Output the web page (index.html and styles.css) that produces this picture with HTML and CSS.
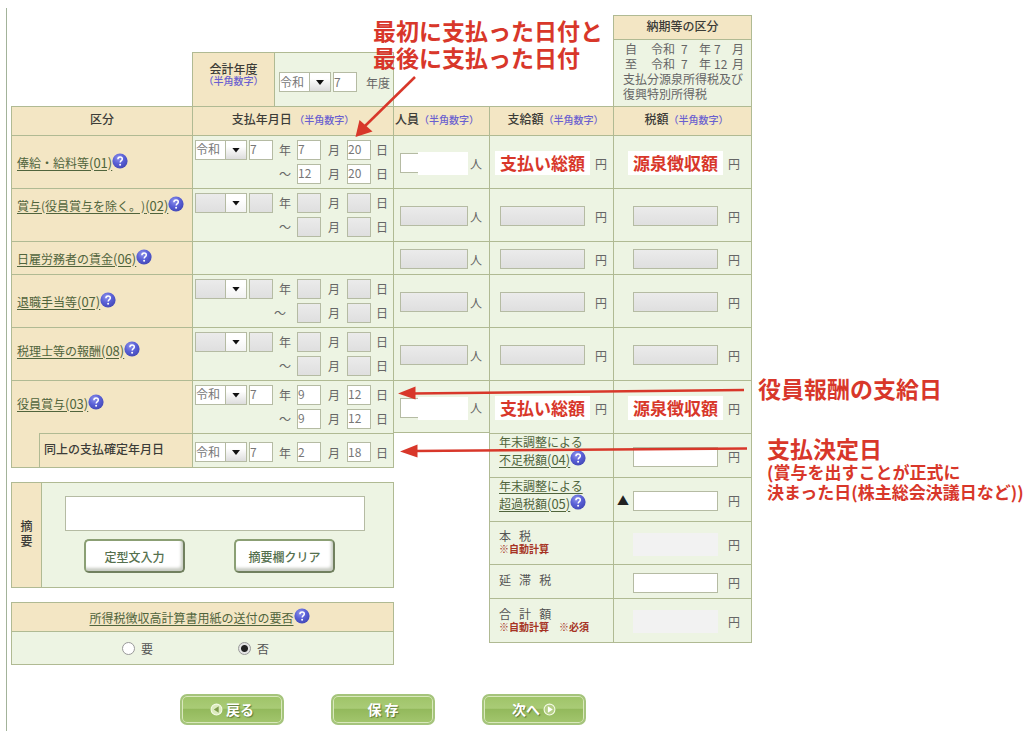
FILE: index.html
```html
<!DOCTYPE html>
<html lang="ja">
<head>
<meta charset="utf-8">
<meta name="viewport" content="width=device-width, initial-scale=1">
<title>所得税徴収高計算書</title>
<link rel="stylesheet" href="styles.css">
</head>
<body>
<svg class="defs" width="0" height="0" aria-hidden="true">
  <defs>
    <radialGradient id="ball" cx="0.4" cy="0.3" r="0.75">
      <stop offset="0" stop-color="#8f94ec"/>
      <stop offset="0.5" stop-color="#5a60d6"/>
      <stop offset="1" stop-color="#4046b4"/>
    </radialGradient>
    <symbol id="help" viewBox="0 0 16 16">
      <circle cx="8" cy="8" r="7.6" fill="url(#ball)"/>
      <path d="M5.9 6.3C5.9 4.8 6.8 4 8.1 4s2.2.8 2.2 2c0 1.700-2.100 1.700-2.100 3.500" fill="none" stroke="#fff" stroke-width="1.500"/>
      <circle cx="8.100" cy="11.700" r="1" fill="#fff"/>
    </symbol>
  </defs>
</svg>
<main class="page">
  <form class="sheet">
    <div class="top">
      <div class="year">
        <div class="year-label">会計年度<span class="hint">（半角数字）</span></div>
        <div class="year-fields">
          <span class="era"><select aria-label="会計年度 元号"><option>令和</option></select></span>
          <input class="num" type="text" value="7" aria-label="会計年度 年">
          <span class="year-unit">年度</span>
        </div>
      </div>
      <div class="period">
        <div class="period-title">納期等の区分</div>
        <div class="period-body">
          <div class="period-row"><span>自</span><span>令和</span><span>7</span><span>年</span><span>7</span><span>月</span></div>
          <div class="period-row"><span>至</span><span>令和</span><span>7</span><span>年</span><span>12</span><span>月</span></div>
          <div>支払分源泉所得税及び<br>復興特別所得税</div>
        </div>
      </div>
    </div>

    <table class="main-table">
      <colgroup><col class="c-name"><col class="c-date"><col class="c-people"><col class="c-pay"><col class="c-tax"></colgroup>
      <thead>
        <tr>
          <th>区分</th>
          <th>支払年月日 <span class="hint">（半角数字）</span></th>
          <th class="tight">人員<span class="hint">（半角数字）</span></th>
          <th class="shift">支給額<span class="hint">（半角数字）</span></th>
          <th class="shift">税額<span class="hint">（半角数字）</span></th>
        </tr>
      </thead>
      <tbody>
        <tr>
          <th class="name"><a href="#">俸給・給料等<span class="code">(01)</span></a><svg class="help"><use href="#help"/></svg></th>
          <td><div class="dates">
            <span class="era"><select aria-label="01 元号"><option>令和</option></select></span><input class="num" type="text" value="7" aria-label="01 年"><span>年</span><input class="num" type="text" value="7" aria-label="01 開始月"><span>月</span><input class="num" type="text" value="20" aria-label="01 開始日"><span>日</span>
            <span class="tilde">～</span><input class="num" type="text" value="12" aria-label="01 終了月"><span>月</span><input class="num" type="text" value="20" aria-label="01 終了日"><span>日</span>
          </div></td>
          <td><div class="people"><span class="masked"><input class="count" type="text" aria-label="01 人員"></span><span>人</span></div></td>
          <td><div class="amount"><strong class="tag">支払い総額</strong><span>円</span></div></td>
          <td><div class="amount tax"><strong class="tag">源泉徴収額</strong><span>円</span></div></td>
        </tr>
        <tr>
          <th class="name raised"><a href="#">賞与(役員賞与を除く。)<span class="code">(02)</span></a><svg class="help"><use href="#help"/></svg></th>
          <td><div class="dates">
            <span class="era"><select disabled aria-label="02 元号"><option></option></select></span><input class="num" type="text" disabled aria-label="02 年"><span>年</span><input class="num" type="text" disabled aria-label="02 開始月"><span>月</span><input class="num" type="text" disabled aria-label="02 開始日"><span>日</span>
            <span class="tilde">～</span><input class="num" type="text" disabled aria-label="02 終了月"><span>月</span><input class="num" type="text" disabled aria-label="02 終了日"><span>日</span>
          </div></td>
          <td><div class="people"><input class="count" type="text" disabled aria-label="02 人員"><span>人</span></div></td>
          <td><div class="amount"><input type="text" disabled aria-label="02 支給額"><span>円</span></div></td>
          <td><div class="amount tax"><input type="text" disabled aria-label="02 税額"><span>円</span></div></td>
        </tr>
        <tr class="short">
          <th class="name"><a href="#">日雇労務者の賃金<span class="code">(06)</span></a><svg class="help"><use href="#help"/></svg></th>
          <td></td>
          <td><div class="people"><input class="count" type="text" disabled aria-label="06 人員"><span>人</span></div></td>
          <td><div class="amount"><input type="text" disabled aria-label="06 支給額"><span>円</span></div></td>
          <td><div class="amount tax"><input type="text" disabled aria-label="06 税額"><span>円</span></div></td>
        </tr>
        <tr>
          <th class="name"><a href="#">退職手当等<span class="code">(07)</span></a><svg class="help"><use href="#help"/></svg></th>
          <td><div class="dates">
            <span class="era"><select disabled aria-label="07 元号"><option></option></select></span><input class="num" type="text" disabled aria-label="07 年"><span>年</span><input class="num" type="text" disabled aria-label="07 開始月"><span>月</span><input class="num" type="text" disabled aria-label="07 開始日"><span>日</span>
            <span class="tilde wide">～</span><input class="num" type="text" disabled aria-label="07 終了月"><span>月</span><input class="num" type="text" disabled aria-label="07 終了日"><span>日</span>
          </div></td>
          <td><div class="people"><input class="count" type="text" disabled aria-label="07 人員"><span>人</span></div></td>
          <td><div class="amount"><input type="text" disabled aria-label="07 支給額"><span>円</span></div></td>
          <td><div class="amount tax"><input type="text" disabled aria-label="07 税額"><span>円</span></div></td>
        </tr>
        <tr>
          <th class="name lifted"><a href="#">税理士等の報酬<span class="code">(08)</span></a><svg class="help"><use href="#help"/></svg></th>
          <td><div class="dates">
            <span class="era"><select disabled aria-label="08 元号"><option></option></select></span><input class="num" type="text" disabled aria-label="08 年"><span>年</span><input class="num" type="text" disabled aria-label="08 開始月"><span>月</span><input class="num" type="text" disabled aria-label="08 開始日"><span>日</span>
            <span class="tilde">～</span><input class="num" type="text" disabled aria-label="08 終了月"><span>月</span><input class="num" type="text" disabled aria-label="08 終了日"><span>日</span>
          </div></td>
          <td><div class="people"><input class="count" type="text" disabled aria-label="08 人員"><span>人</span></div></td>
          <td><div class="amount"><input type="text" disabled aria-label="08 支給額"><span>円</span></div></td>
          <td><div class="amount tax"><input type="text" disabled aria-label="08 税額"><span>円</span></div></td>
        </tr>
        <tr>
          <th class="name lifted"><a href="#">役員賞与<span class="code">(03)</span></a><svg class="help"><use href="#help"/></svg></th>
          <td><div class="dates">
            <span class="era"><select aria-label="03 元号"><option>令和</option></select></span><input class="num" type="text" value="7" aria-label="03 年"><span>年</span><input class="num" type="text" value="9" aria-label="03 開始月"><span>月</span><input class="num" type="text" value="12" aria-label="03 開始日"><span>日</span>
            <span class="tilde">～</span><input class="num" type="text" value="9" aria-label="03 終了月"><span>月</span><input class="num" type="text" value="12" aria-label="03 終了日"><span>日</span>
          </div></td>
          <td class="closed"><div class="people"><span class="masked"><input class="count" type="text" aria-label="03 人員"></span><span>人</span></div></td>
          <td><div class="amount"><strong class="tag">支払い総額</strong><span>円</span></div></td>
          <td><div class="amount tax"><strong class="tag">源泉徴収額</strong><span>円</span></div></td>
        </tr>
      </tbody>
    </table>

    <div class="lower">
      <div class="left">
        <div class="fixed-date">
          <div class="fixed-label">同上の支払確定年月日</div>
          <div class="fixed-fields"><div class="dates">
            <span class="era"><select aria-label="確定 元号"><option>令和</option></select></span><input class="num" type="text" value="7" aria-label="確定 年"><span>年</span><input class="num" type="text" value="2" aria-label="確定 月"><span>月</span><input class="num" type="text" value="18" aria-label="確定 日"><span>日</span>
          </div></div>
        </div>
        <div class="memo">
          <label class="memo-label" for="memo">摘<br>要</label>
          <div class="memo-body">
            <textarea id="memo"></textarea>
            <div class="memo-buttons">
              <button type="button" class="white-button">定型文入力</button>
              <button type="button" class="white-button">摘要欄クリア</button>
            </div>
          </div>
        </div>
        <div class="send">
          <div class="send-title"><a href="#">所得税徴収高計算書用紙の送付の要否</a><svg class="help"><use href="#help"/></svg></div>
          <div class="send-options">
            <label><input type="radio" name="send">要</label>
            <label><input type="radio" name="send" checked>否</label>
          </div>
        </div>
      </div>

      <table class="totals">
        <colgroup><col class="c-pay"><col class="c-tax"></colgroup>
        <tr>
          <th class="linked"><a href="#">年末調整による<br>不足税額<span class="code">(04)</span></a><svg class="help"><use href="#help"/></svg></th>
          <td><div class="amount tax"><input type="text" aria-label="不足税額(04)"><span>円</span></div></td>
        </tr>
        <tr>
          <th class="linked"><a href="#">年末調整による<br>超過税額<span class="code">(05)</span></a><svg class="help"><use href="#help"/></svg></th>
          <td><div class="amount tax minus"><span class="mark">▲</span><input type="text" aria-label="超過税額(05)"><span>円</span></div></td>
        </tr>
        <tr>
          <th>本&nbsp;&nbsp; 税<span class="note">※自動計算</span></th>
          <td><div class="amount tax"><output class="blank"></output><span>円</span></div></td>
        </tr>
        <tr class="short">
          <th>延&nbsp;&nbsp; 滞&nbsp;&nbsp; 税</th>
          <td><div class="amount tax"><input type="text" aria-label="延滞税"><span>円</span></div></td>
        </tr>
        <tr class="last">
          <th>合&nbsp;&nbsp; 計&nbsp;&nbsp; 額<span class="note">※自動計算　※必須</span></th>
          <td><div class="amount tax"><output class="blank"></output><span>円</span></div></td>
        </tr>
      </table>
    </div>

    <div class="actions">
      <button type="button" class="green-button"><svg viewBox="0 0 12 12"><circle cx="6" cy="6" r="5" fill="#dcebbf" stroke="#f4fae6"/><path d="M8 3v6L3.500 6z" fill="#7f9d4d"/></svg>戻る</button>
      <button type="button" class="green-button">保&nbsp;存</button>
      <button type="button" class="green-button">次へ<svg viewBox="0 0 12 12"><circle cx="6" cy="6" r="5" fill="#b5cf86" stroke="#f4fae6"/><path d="M4.500 3v6L9 6z" fill="#fff"/></svg></button>
    </div>
  </form>

  <svg class="arrows" width="760" height="480" viewBox="0 0 760 480" aria-hidden="true">
    <g stroke="#d8372a" stroke-width="2.500" fill="none">
      <path d="M415 77L365 126"/>
      <path d="M744 390L412 393.500"/>
      <path d="M747 448.500L414 451"/>
    </g>
    <g fill="#d8372a">
      <path d="M355.500 137L359.500 120L372.500 131.500Z"/>
      <path d="M398 393.500L415.500 386.500V399.500Z"/>
      <path d="M400 451.500L417.500 444.500V457.500Z"/>
    </g>
  </svg>
  <p class="callout callout-dates">最初に支払った日付と<br>最後に支払った日付</p>
  <p class="callout callout-payday">役員報酬の支給日</p>
  <p class="callout callout-decision">支払決定日<small>(賞与を出すことが正式に<br>決まった日(株主総会決議日など))</small></p>
</main>
</body>
</html>
```
FILE: styles.css
```css
* {
  box-sizing: border-box;
}

:root {
  --line: #b0ba93;
  --tan: #f3e6c4;
  --pale: #edf4e3;
  --red: #d8372a;
}

body {
  margin: 0;
  background: #fff;
  color: #3c3c38;
  font: 12px/15px "Noto Sans CJK JP", sans-serif;
  text-spacing-trim: space-all;
}

.defs {
  position: absolute;
}

.page {
  margin: 8px 0 0 6px;
  padding: 7px 0 6px 4px;
  border-left: 1px solid #a3b39a;
}

.sheet {
  max-width: 741px;
}

a {
  color: #50643c;
  text-decoration: underline;
  text-underline-offset: 2px;
}

.code {
  font-size: 13px;
}

input,
select,
textarea,
button {
  font: inherit;
  margin: 0;
}

input[type="text"],
select {
  height: 20px;
  padding: 0 0 2px;
  border: 1px solid #b5bba3;
  border-radius: 0;
  background: #fff;
  color: #777;
  width: 100%;
  min-width: 0;
}

input[type="text"]:disabled {
  background: linear-gradient(#ebebeb, #dfdfdf);
}

.num {
  flex: none;
}

.era {
  position: relative;
  display: block;
  width: 52px;
}

.era select {
  display: block;
  appearance: none;
  opacity: 1;
  background: linear-gradient(90deg, #b5bba3 1px, transparent 1px) right / 21px 100% no-repeat,
    linear-gradient(#fff 30%, #ddd) right / 20px 100% no-repeat, #fff;
}

.era select:disabled {
  background: linear-gradient(90deg, #b5bba3 1px, transparent 1px) right / 21px 100% no-repeat,
    linear-gradient(#fff 30%, #f2f2f2) right / 20px 100% no-repeat,
    linear-gradient(#ebebeb, #dfdfdf);
}

.era::after {
  content: "";
  position: absolute;
  top: 8px;
  right: 7px;
  width: 8px;
  height: 5px;
  background: #111;
  clip-path: polygon(0 0, 100% 0, 50% 100%);
  pointer-events: none;
}

.hint {
  color: #6a60d0;
  font-size: 10px;
  font-weight: 500;
}

.help {
  width: 16px;
  height: 16px;
  vertical-align: -1px;
}

/* fiscal year and payment period */
.top {
  display: flex;
  justify-content: space-between;
  align-items: flex-end;
  padding-left: 181px;
}

.year {
  display: grid;
  grid-template-columns: 81px 119px;
  height: 54px;
  border: 1px solid var(--line);
  border-bottom: 0;
}

.year-label {
  display: flex;
  flex-direction: column;
  align-items: center;
  justify-content: center;
  padding-bottom: 10px;
  background: var(--tan);
  font-weight: 500;
  line-height: 12px;
}

.year-fields {
  display: flex;
  align-items: center;
  gap: 2px;
  padding: 5px 0 0 4px;
  border-left: 1px solid var(--line);
  background: var(--pale);
}

.year-fields .num {
  width: 24px;
}

.year-unit {
  padding-left: 7px;
  color: #666;
}

.period {
  width: 139px;
  border: 1px solid var(--line);
  border-bottom: 0;
}

.period-title {
  height: 24px;
  padding-top: 2px;
  background: var(--tan);
  border-bottom: 1px solid var(--line);
  font-weight: 500;
  text-align: center;
}

.period-body {
  height: 66px;
  padding: 1px 0 0 9px;
  background: var(--pale);
  color: #666;
}

.period-row {
  display: grid;
  grid-template-columns: 26px 30px 18px 15px 18px 1fr;
  padding-left: 2px;
}

/* payment table */
table {
  width: 100%;
  table-layout: fixed;
  border-spacing: 0;
  border-right: 1px solid var(--line);
}

.c-name { width: 181px; }
.c-date { width: 201px; }
.c-people { width: 96px; }
.c-pay { width: 124px; }
.c-tax { width: 138px; }

th,
td {
  height: 53px;
  padding: 0;
  border-top: 1px solid var(--line);
  border-left: 1px solid var(--line);
  background: var(--pale);
}

thead th {
  height: 29px;
  padding-bottom: 5px;
  background: var(--tan);
  font-weight: 500;
  white-space: nowrap;
}

thead .tight {
  text-align: left;
  padding-left: 1px;
}

thead .shift {
  padding-left: 8px;
}

.short th,
.short td {
  height: 33px;
}

.name {
  padding: 0 0 2px 5px;
  background: var(--tan);
  font-weight: 400;
  text-align: left;
  white-space: nowrap;
}

.raised {
  padding-bottom: 22px;
}

.lifted {
  padding-bottom: 10px;
}

.closed {
  border-bottom: 1px solid var(--line);
}

.dates {
  display: grid;
  grid-template-columns: 54px 24px 24px 24px 26px 24px 1fr;
  align-items: center;
  row-gap: 4px;
  padding-left: 2px;
  color: #666;
  text-align: center;
}

.dates .num {
  width: 24px;
}

td .dates {
  padding-bottom: 1px;
}

.tilde {
  grid-column: 3;
}

.wide {
  padding-right: 10px;
}

.people,
.amount {
  display: flex;
  align-items: center;
  padding: 2px 0 0 6px;
  gap: 2px;
  color: #666;
}

.people .count {
  display: block;
  width: 68px;
}

.masked {
  position: relative;
}

.masked::after {
  content: "";
  position: absolute;
  inset: -1px 0 -2px 18px;
  background: #fff;
}

.amount {
  padding-left: 10px;
  gap: 10px;
}

.amount input,
.blank {
  flex: none;
  width: 85px;
}

.tax {
  padding-left: 19px;
}

.tag {
  margin: 0 -5px;
  padding: 0 5px;
  background: #fff;
  color: var(--red);
  font-size: 17px;
  font-weight: 700;
  line-height: 24px;
  white-space: nowrap;
}

.blank {
  height: 23px;
  background: #f2f2f2;
}

/* area under the table */
.lower {
  display: flex;
  justify-content: space-between;
  align-items: flex-start;
}

.left {
  width: 383px;
}

.fixed-date {
  display: grid;
  grid-template-columns: 181px 1fr;
  height: 35px;
  border: 1px solid var(--line);
  border-top: 0;
  background: var(--tan);
}

.fixed-label {
  margin-left: 27px;
  padding: 7px 0 0 4px;
  border-top: 1px solid var(--line);
  border-left: 1px solid var(--line);
  font-weight: 500;
}

.fixed-fields {
  margin-left: -1px;
  padding-top: 8px;
  border-top: 1px solid var(--line);
  border-left: 1px solid var(--line);
  background: var(--pale);
}

.memo {
  display: grid;
  grid-template-columns: 30px 1fr;
  margin-top: 14px;
  border: 1px solid var(--line);
  background: var(--pale);
}

.memo-label {
  display: flex;
  align-items: center;
  justify-content: center;
  padding-bottom: 4px;
  border-right: 1px solid var(--line);
  background: var(--tan);
  font-weight: 500;
}

.memo-body {
  padding: 13px 28px 14px 23px;
}

textarea {
  display: block;
  width: 100%;
  height: 35px;
  border: 1px solid #b5bba3;
  resize: none;
}

.memo-buttons {
  display: flex;
  gap: 49px;
  padding: 8px 0 0 19px;
}

.white-button {
  width: 101px;
  height: 34px;
  padding: 0;
  border: 2px solid #8b9f74;
  border-right-color: #71805f;
  border-bottom-color: #71805f;
  border-radius: 5px;
  background: #fff;
  box-shadow: inset -2px -3px 3px #c9cdc4;
  color: #55704e;
  font-size: 12px;
  font-weight: 500;
  white-space: nowrap;
}

.send {
  margin-top: 14px;
  border: 1px solid var(--line);
  background: var(--pale);
}

.send-title {
  height: 29px;
  padding: 5px 6px 0 0;
  border-bottom: 1px solid var(--line);
  background: var(--tan);
  text-align: center;
}

.send-options {
  display: flex;
  gap: 85px;
  height: 32px;
  padding-left: 110px;
  color: #555;
}

.send-options label {
  display: flex;
  align-items: center;
  gap: 6px;
}

.send-options input {
  appearance: none;
  width: 13px;
  height: 13px;
  border: 1px solid #999;
  border-radius: 50%;
  background: #fff;
}

.send-options input:checked {
  background: radial-gradient(circle, #222 0 3px, #e4e4e4 4px);
}

.totals {
  width: 263px;
}

.totals th,
.totals td {
  height: 43px;
}

.totals tr:first-child th {
  height: 44px;
}

.totals th {
  padding: 0 0 5px 9px;
  color: #555;
  font-weight: 400;
  line-height: 17px;
  text-align: left;
}

.totals .linked {
  padding-bottom: 9px;
  line-height: 16px;
}

.totals .short th,
.totals .short td {
  height: 34px;
}

.totals .last th,
.totals .last td {
  height: 45px;
  border-bottom: 1px solid var(--line);
}

.minus {
  padding-left: 3px;
}

.minus .mark {
  width: 12px;
  margin-right: -6px;
  color: #222;
}

.note {
  display: block;
  color: #a63324;
  font-size: 10px;
  font-weight: 700;
  line-height: 10px;
}

.actions {
  display: flex;
  gap: 47px;
  padding: 29px 0 0 169px;
}

.green-button {
  display: flex;
  align-items: center;
  justify-content: center;
  gap: 3px;
  width: 104px;
  height: 31px;
  padding: 0;
  border: 2px solid #a5c47c;
  border-radius: 7px;
  background: linear-gradient(#9fc468, #a9cb76 45%, #93b95c 50%, #a3c66e);
  box-shadow: inset 0 0 0 1px #d9e8bd;
  color: #fff;
  font-size: 14px;
  font-weight: 700;
  text-shadow: 1px 1px 1px #5f7a3a;
}

.green-button svg {
  width: 13px;
  height: 13px;
}

/* red callouts laid over the form */
.arrows {
  position: absolute;
  top: 0;
  left: 0;
  pointer-events: none;
}

.callout {
  position: absolute;
  margin: 0;
  color: var(--red);
  font-size: 23px;
  font-weight: 700;
  line-height: 27px;
  white-space: nowrap;
}

.callout small {
  display: block;
  font-size: 17px;
  line-height: 20px;
}

.callout-dates {
  top: 17px;
  left: 373px;
}

.callout-payday {
  top: 375px;
  left: 758px;
}

.callout-decision {
  top: 435px;
  left: 767px;
}
```
